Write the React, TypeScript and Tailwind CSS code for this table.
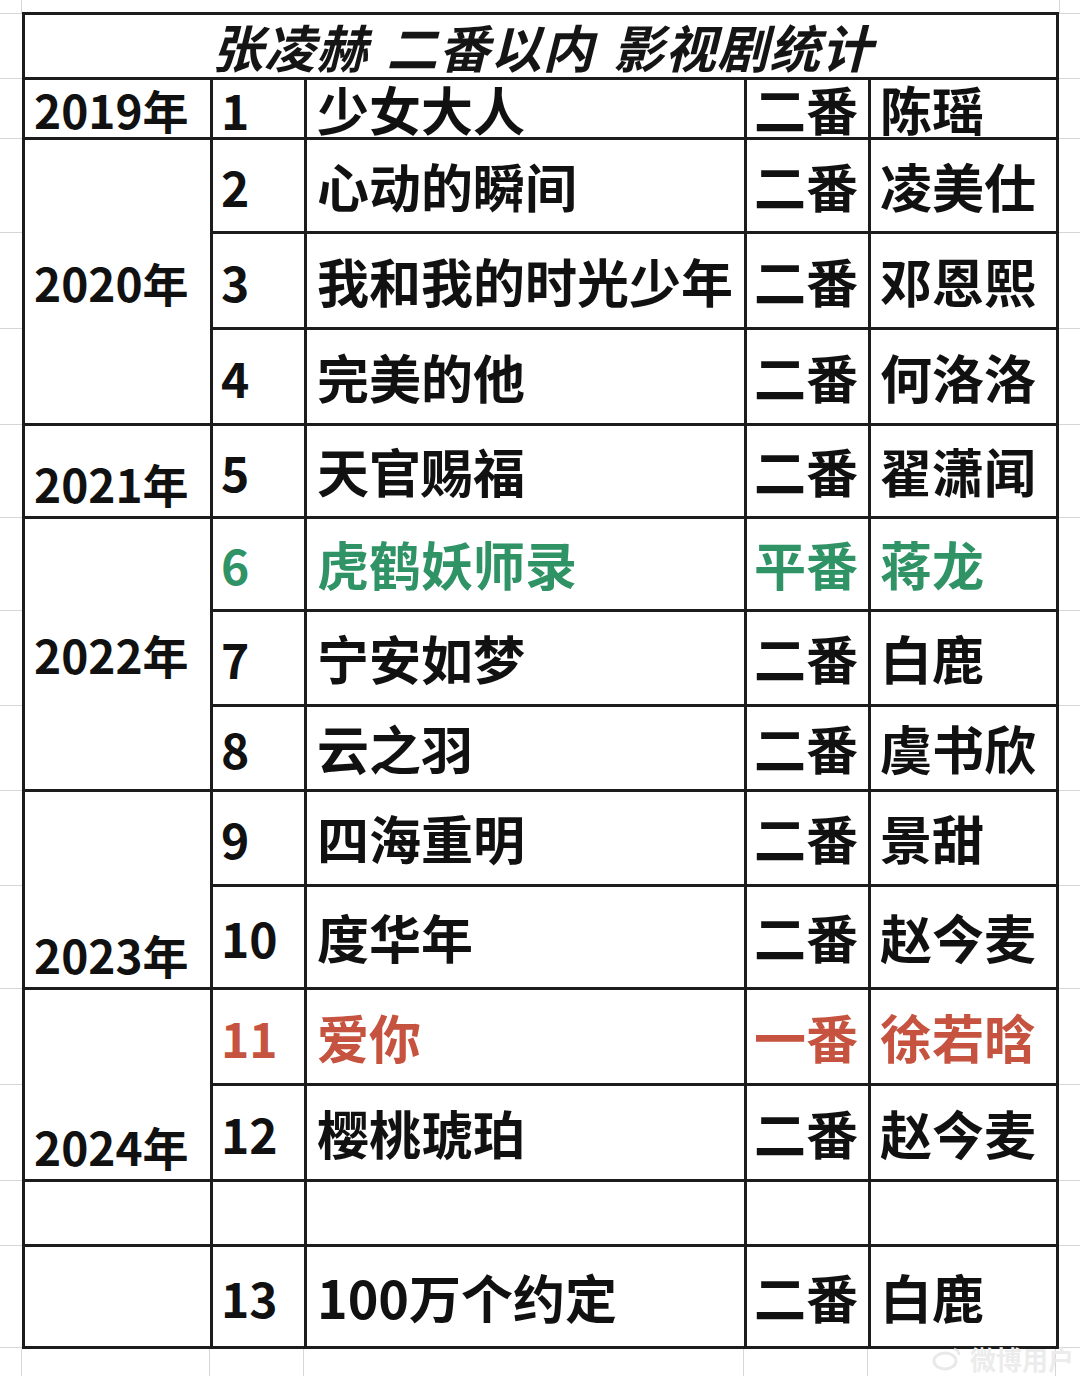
import React from "react";

type Row = {
  n: string;
  title: string;
  role: string;
  actor: string;
  h: string;
  tone?: "green" | "red";
};

type YearCell = { label: string; span: string; align: string };

// row heights follow the reference sheet, title row first
const gutterRows = [65, 60, 94, 96, 96, 93, 93, 95, 85, 95, 103, 96, 96, 65, 102];

const years: Record<number, YearCell> = {
  0: { label: "2019年", span: "row-span-1", align: "items-center" },
  1: { label: "2020年", span: "row-span-3", align: "items-center" },
  4: { label: "2021年", span: "row-span-1", align: "items-end pb-[10px]" },
  5: { label: "2022年", span: "row-span-3", align: "items-center" },
  8: { label: "2023年", span: "row-span-2", align: "items-end pb-[10px]" },
  10: { label: "2024年", span: "row-span-2", align: "items-end pb-[10px]" },
  12: { label: "", span: "row-span-1", align: "items-center" },
  13: { label: "", span: "row-span-1", align: "items-center" },
};

const rows: Row[] = [
  { n: "1", title: "少女大人", role: "二番", actor: "陈瑶", h: "h-[57px]" },
  { n: "2", title: "心动的瞬间", role: "二番", actor: "凌美仕", h: "h-[91px]" },
  { n: "3", title: "我和我的时光少年", role: "二番", actor: "邓恩熙", h: "h-[93px]" },
  { n: "4", title: "完美的他", role: "二番", actor: "何洛洛", h: "h-[93px]" },
  { n: "5", title: "天官赐福", role: "二番", actor: "翟潇闻", h: "h-[90px]" },
  { n: "6", title: "虎鹤妖师录", role: "平番", actor: "蒋龙", h: "h-[90px]", tone: "green" },
  { n: "7", title: "宁安如梦", role: "二番", actor: "白鹿", h: "h-[92px]" },
  { n: "8", title: "云之羽", role: "二番", actor: "虞书欣", h: "h-[82px]" },
  { n: "9", title: "四海重明", role: "二番", actor: "景甜", h: "h-[92px]" },
  { n: "10", title: "度华年", role: "二番", actor: "赵今麦", h: "h-[100px]" },
  { n: "11", title: "爱你", role: "一番", actor: "徐若晗", h: "h-[93px]", tone: "red" },
  { n: "12", title: "樱桃琥珀", role: "二番", actor: "赵今麦", h: "h-[93px]" },
  { n: "", title: "", role: "", actor: "", h: "h-[62px]" },
  { n: "13", title: "100万个约定", role: "二番", actor: "白鹿", h: "h-[99px]" },
];

const toneClass = (tone?: Row["tone"]) =>
  tone === "green" ? "text-[#2f9366]" : tone === "red" ? "text-[#c5533f]" : "text-[#111111]";

function Gutter({ side }: { side: "left" | "right" }) {
  const edge = side === "left" ? "border-r" : "border-l";
  return (
    <div className={side === "left" ? "flex w-[22px] flex-col" : "flex flex-1 flex-col"}>
      <div className={`h-[13px] ${edge} border-[#d6d6d6]`} />
      {gutterRows.map((h, i) => (
        <div
          key={i}
          className="border-t border-[#d6d6d6]"
          style={{ height: h }}
        />
      ))}
      <div className="flex-1 border-t border-[#d6d6d6]" />
    </div>
  );
}

function Cell({ children, className }: { children?: React.ReactNode; className?: string }) {
  return <div className={`flex items-center bg-white ${className ?? ""}`}>{children}</div>;
}

export default function App() {
  return (
    <div className="relative flex h-[1376px] w-[1080px] flex-col overflow-hidden bg-white font-['Noto_Sans_CJK_SC',sans-serif] text-[52px] font-bold leading-none">
      <div className="flex">
        <Gutter side="left" />
        <div className="mt-[12px] grid w-[1037px] grid-cols-[185px_91px_437px_121px_185px] gap-[3px] bg-[#1c1c1c] p-[3px]">
          <Cell className="col-span-5 h-[62px] justify-center">
            <span className="pl-[4px] text-[51px] font-semibold italic tracking-[1px] text-[#151515] [word-spacing:6px]">
              张凌赫 二番以内 影视剧统计
            </span>
          </Cell>
          {rows.map((r, i) => {
            const y = years[i];
            const color = toneClass(r.tone);
            return (
              <React.Fragment key={i}>
                {y && (
                  <Cell className={`col-start-1 ${y.span} ${y.align} pl-[9px] text-[46px] text-[#111111]`}>
                    {y.label}
                  </Cell>
                )}
                <Cell className={`col-start-2 ${r.h} pl-[8px] text-[48px] ${color}`}>{r.n}</Cell>
                <Cell className={`pl-[10px] ${color}`}>{r.title}</Cell>
                <Cell className={`pl-[7px] ${color}`}>{r.role}</Cell>
                <Cell className={`pl-[9px] ${color}`}>{r.actor}</Cell>
              </React.Fragment>
            );
          })}
        </div>
        <Gutter side="right" />
      </div>
      <div className="flex flex-1">
        <div className="w-[22px] border-r border-[#d6d6d6]" />
        <div className="w-[188px] border-r border-[#d6d6d6]" />
        <div className="w-[94px] border-r border-[#d6d6d6]" />
        <div className="w-[440px] border-r border-[#d6d6d6]" />
        <div className="w-[124px] border-r border-[#d6d6d6]" />
        <div className="w-[188px] border-r border-[#d6d6d6]" />
        <div className="flex-1" />
      </div>
      <div className="absolute bottom-[4px] right-[6px] flex items-center gap-[8px] text-[26px] font-bold text-[#ececec]">
        <svg width="30" height="26" viewBox="0 0 30 26" className="opacity-80">
          <ellipse cx="13" cy="15" rx="11" ry="8" fill="none" stroke="#e4e4e4" strokeWidth="3" />
          <path d="M22 3 q5 1 5 6" fill="none" stroke="#e4e4e4" strokeWidth="2.5" />
        </svg>
        <span>微博用户</span>
      </div>
    </div>
  );
}
